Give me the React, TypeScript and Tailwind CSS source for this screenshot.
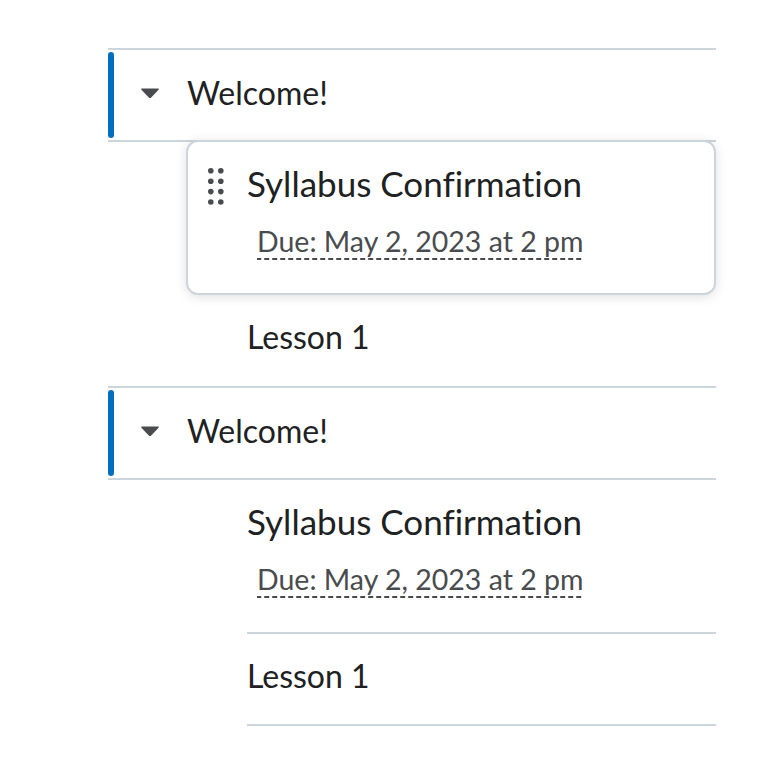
import React from 'react';

const font = { fontFamily: 'Lato, "Noto Sans", sans-serif' };

const Caret = () => (
  <svg width="20" height="12" viewBox="0 0 20 12" className="shrink-0">
    <path d="M2 1.5 H18 Q19.5 1.5 18.6 2.8 L11.2 10.4 Q10 11.6 8.8 10.4 L1.4 2.8 Q0.5 1.5 2 1.5 Z" fill="#494c4e" />
  </svg>
);

const DragHandle = () => (
  <svg width="16" height="37" viewBox="0 0 16 37" className="shrink-0">
    {[0, 1, 2, 3].map((r) =>
      [0, 1].map((c) => (
        <circle key={`${r}-${c}`} cx={2.8 + c * 10} cy={2.8 + r * 10.4} r="2.8" fill="#494c4e" />
      ))
    )}
  </svg>
);

const ItemText = () => (
  <div className="[font-variant-ligatures:none]">
    <div className="text-[35px] leading-[40px] text-[#202122]">Syllabus Confirmation</div>
    <div className="ml-[10px] mt-[20px] flex">
      <span className="text-[28.5px] leading-[36px] text-[#494c4e] pb-[1px] bg-[linear-gradient(to_right,#494c4e_5px,transparent_5px)] bg-[length:8px_2px] bg-repeat-x bg-bottom">
        Due: May 2, 2023 at 2 pm
      </span>
    </div>
  </div>
);

const ModuleHeader = ({ title }: { title: string }) => (
  <div className="border-y-2 border-[#cdd5dc] h-[94px] flex items-stretch">
    <div className="w-[6px] my-[2px] rounded-full bg-[#006fbf]" />
    <div className="flex items-center pl-[26px] gap-[27px] -mt-[4px]">
      <Caret />
      <span className="text-[32px] text-[#202122] leading-none">{title}</span>
    </div>
  </div>
);

export default function App() {
  return (
    <div className="bg-white min-h-screen pt-[48px] pl-[108px] pr-[48px]" style={font}>
      {/* first module, item being dragged */}
      <div>
        <ModuleHeader title="Welcome!" />
        <div className="ml-[78px]">
          <div className="relative -mt-[2px] h-[155px] rounded-xl border-2 border-[#cdd5dc] bg-white shadow-[0_2px_12px_rgba(0,0,0,0.12)] flex pt-[21px]">
            <div className="w-[59px] pl-[20px] pt-[5px]">
              <DragHandle />
            </div>
            <ItemText />
          </div>
          <div className="pl-[61px]">
            <div className="h-[91px] pt-[22px] text-[32px] leading-[40px] text-[#202122]">Lesson 1</div>
          </div>
        </div>
      </div>

      {/* second module */}
      <div>
        <ModuleHeader title="Welcome!" />
        <div className="ml-[78px]">
          <div className="pl-[61px]">
            <div className="h-[154px] border-b-2 border-[#cdd5dc] pt-[21px]">
              <ItemText />
            </div>
          </div>
          <div className="pl-[61px]">
            <div className="h-[92px] border-b-2 border-[#cdd5dc] pt-[22px] text-[32px] leading-[40px] text-[#202122]">Lesson 1</div>
          </div>
        </div>
      </div>
    </div>
  );
}
